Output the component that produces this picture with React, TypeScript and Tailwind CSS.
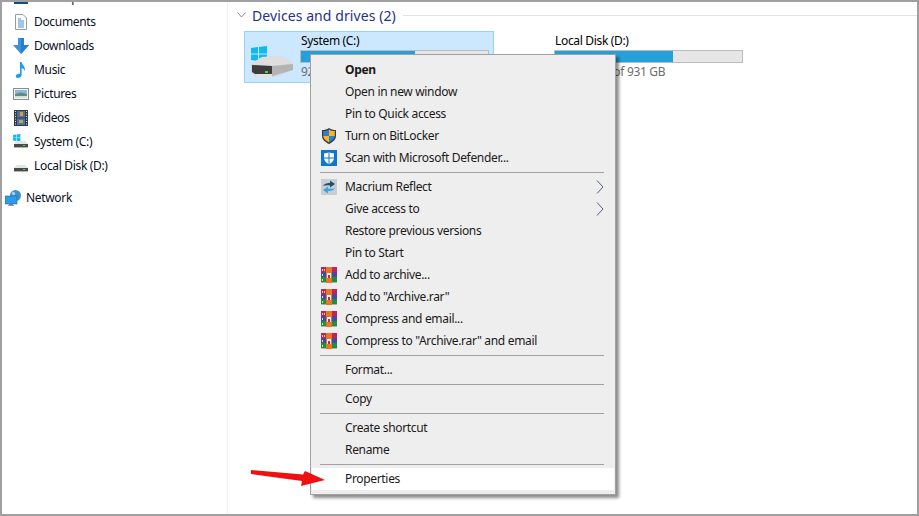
import React from "react";

const DriveBody = ({ x = 0, y = 0 }: { x?: number; y?: number }) => (
  <g transform={`translate(${x} ${y})`}>
    <path d="M0 8 L11 1 L32 0 L42 8 V14 L21 22 H5 L0 16 Z" fill="#d6d6d6" />
    <path d="M0 8 L11 1 L32 0 L42 8 L21 10 Z" fill="#dedede" />
    <path d="M1 9 L21 10 V18 H4 L1 16 Z" fill="#3c3c3c" />
    <path d="M21 10 L42 8 V14 L21 20 Z" fill="#b4b4b4" />
    <path d="M4 18 H21 V22 H6 Z" fill="#e2e2e2" />
    <rect x="14" y="15" width="3" height="2" fill="#3fdc4c" />
  </g>
);

const WinLogo = ({ x, y, s = 1 }: { x: number; y: number; s?: number }) => (
  <g transform={`translate(${x} ${y}) scale(${s})`} fill="#12b8f0">
    <path d="M0 2 L7 1 V7.4 H0 Z" />
    <path d="M8 .9 L16 0 V7.4 H8 Z" />
    <path d="M0 8.4 H7 V15 L0 14 Z" />
    <path d="M8 8.4 H16 V16 L8 15.1 Z" />
  </g>
);

const NavIcon = ({ name }: { name: string }) => {
  const cls = "shrink-0 w-4 h-4";
  switch (name) {
    case "desktop":
      return (
        <svg className={cls} viewBox="0 0 16 16">
          <rect x="1" y="2" width="14" height="10" fill="#1b6fb5" />
          <rect x="1" y="12" width="14" height="2" fill="#0f4c81" />
        </svg>
      );
    case "documents":
      return (
        <svg className={cls} viewBox="0 0 16 16">
          <path d="M2.5 .5 H10 L13.5 4 V15.5 H2.5 Z" fill="#fdfdfd" stroke="#9a9a9a" />
          <path d="M5 5 H8 M5 7 H11 M5 9 H11 M5 11 H11 M5 13 H11" stroke="#3f8fd0" strokeWidth="1" />
        </svg>
      );
    case "downloads":
      return (
        <svg className={cls} viewBox="0 0 16 16">
          <path d="M5 0 H11 V7 H16 L8 16 L0 7 H5 Z" fill="#3a91dc" />
          <path d="M8 0 H11 V7 H16 L8 16 Z" fill="#2a7fcc" />
        </svg>
      );
    case "music":
      return (
        <svg className={cls} viewBox="0 0 16 16">
          <path d="M7 0 H8.6 C9 3 12.5 4 12 9 C11.6 8 10.5 6.5 8.6 6 V13 C8.6 15 6.6 16 5 16 C3.5 16 2.6 15 2.8 14 C3 12.5 5 11.4 7 12 Z" fill="#1f9bef" />
        </svg>
      );
    case "pictures":
      return (
        <svg className={cls} viewBox="0 0 16 16">
          <rect x=".5" y="2.5" width="15" height="11" fill="#f5f5f5" stroke="#8c8c8c" />
          <rect x="2" y="4" width="12" height="4" fill="#8fb8e0" />
          <path d="M2 8 L8 6.5 L14 8 V12 H2 Z" fill="#5f8f7a" />
          <rect x="2" y="10" width="12" height="2" fill="#cfe3d8" />
        </svg>
      );
    case "videos":
      return (
        <svg className={cls} viewBox="0 0 16 16">
          <rect x="1" y="0" width="14" height="16" fill="#3a3a3a" />
          <rect x="4" y="1" width="8" height="6.5" fill="#4d6fb0" />
          <rect x="4" y="8.5" width="8" height="6.5" fill="#3f73c4" />
          <path d="M7 2 H10 V6 H7 Z M6 10 H10 V13 H6 Z" fill="#c9a63a" />
          <path d="M2 1.5 H3 M2 4 H3 M2 6.5 H3 M2 9 H3 M2 11.5 H3 M2 14 H3 M13 1.5 H14 M13 4 H14 M13 6.5 H14 M13 9 H14 M13 11.5 H14 M13 14 H14" stroke="#e0e0e0" strokeWidth="1" />
        </svg>
      );
    case "system":
      return (
        <svg className={cls} viewBox="0 0 16 16">
          <WinLogo x={0} y={0} s={0.46} />
          <path d="M1 10 L4 7 H12 L15 10 Z" fill="#e4e4e4" />
          <rect x="1" y="10" width="14" height="3" fill="#4a4a4a" />
          <rect x="1" y="13" width="14" height="1" fill="#b5b5b5" />
          <rect x="10" y="11" width="2" height="1" fill="#46e04f" />
        </svg>
      );
    case "disk":
      return (
        <svg className={cls} viewBox="0 0 16 16">
          <path d="M1 10 L4 7 H12 L15 10 Z" fill="#e4e4e4" />
          <rect x="1" y="10" width="14" height="3" fill="#4a4a4a" />
          <rect x="1" y="13" width="14" height="1" fill="#b5b5b5" />
          <rect x="10" y="11" width="2" height="1" fill="#46e04f" />
        </svg>
      );
    default:
      return (
        <svg className="shrink-0 w-[17px] h-4" viewBox="0 0 17 16">
          <circle cx="10.5" cy="5.5" r="5.5" fill="#3f8fc9" />
          <path d="M7 2 C9 1 11 3 10 5 C8 6 6 4 7 2 Z" fill="#9fd0ee" />
          <rect x="0" y="6" width="12" height="8" fill="#2f9be8" stroke="#1a6fb5" strokeWidth=".6" />
          <rect x="4" y="14" width="4" height="1" fill="#7a7a7a" />
          <rect x="3" y="15" width="6" height="1" fill="#9a9a9a" />
        </svg>
      );
  }
};

const nav = [
  ["desktop", "Desktop"],
  ["documents", "Documents"],
  ["downloads", "Downloads"],
  ["music", "Music"],
  ["pictures", "Pictures"],
  ["videos", "Videos"],
  ["system", "System (C:)"],
  ["disk", "Local Disk (D:)"],
];

const Shield = () => (
  <svg className="w-4 h-4" viewBox="0 0 16 16">
    <path d="M8 0 C10 1.5 12.5 2 15 2 V8 C15 12 11 14.5 8 16 C5 14.5 1 12 1 8 V2 C3.5 2 6 1.5 8 0 Z" fill="#3a3a4a" />
    <path d="M8 1.5 V8 H2.2 V3 C4 3 6.4 2.6 8 1.5 Z" fill="#2f7fd0" />
    <path d="M8 1.5 C9.6 2.6 12 3 13.8 3 V8 H8 Z" fill="#f6b81a" />
    <path d="M2.2 8 H8 V14.4 C5.4 13 2.4 11 2.2 8 Z" fill="#f6b81a" />
    <path d="M8 8 H13.8 C13.6 11 10.6 13 8 14.4 Z" fill="#2f7fd0" />
  </svg>
);

const Defender = () => (
  <svg className="w-4 h-4" viewBox="0 0 16 16">
    <rect width="16" height="16" fill="#0a78d4" />
    <path d="M8 2 C9.5 3 11.5 3.4 13 3.4 V8 C13 11 10.5 13 8 14.2 C5.5 13 3 11 3 8 V3.4 C4.5 3.4 6.5 3 8 2 Z" fill="#fff" />
    <path d="M7.5 2 H8.5 V14 H7.5 Z M3 7.5 H13 V8.5 H3 Z" fill="#0a78d4" />
  </svg>
);

const Macrium = () => (
  <svg className="w-4 h-4" viewBox="0 0 16 16">
    <rect width="16" height="16" fill="#c9ced2" />
    <path d="M2 7 C4 4 7 4 9 4 V1.5 L14 5 L9 8.5 V6.5 C7 6 4 6 2 7 Z" fill="#1f4f72" />
    <path d="M14 9 C12 12 9 12 7 12 V14.5 L2 11 L7 7.5 V9.5 C9 10 12 10 14 9 Z" fill="#3aa6e0" />
  </svg>
);

const Rar = () => (
  <svg className="w-4 h-4" viewBox="0 0 16 16" shapeRendering="crispEdges">
    <rect x="0" y="0" width="16" height="5" fill="#c2225c" />
    <rect x="0" y="5" width="16" height="5" fill="#4a46a8" />
    <rect x="0" y="10" width="16" height="5" fill="#1f8f3c" />
    <rect x="0" y="15" width="16" height="1" fill="#b0b0b0" />
    <rect x="5" y="0" width="6" height="16" fill="#e8762a" />
    <rect x="6" y="6" width="4" height="5" fill="#fff" />
    <rect x="7" y="8" width="2" height="3" fill="#c2225c" />
    <rect x="1" y="2" width="1" height="2" fill="#f2e04a" />
    <rect x="3" y="2" width="1" height="2" fill="#f2e04a" />
    <rect x="1" y="7" width="1" height="2" fill="#f2e04a" />
    <rect x="1" y="12" width="1" height="2" fill="#f2e04a" />
  </svg>
);

const Chevron = () => (
  <svg className="w-2 h-[14px]" viewBox="0 0 8 14">
    <path d="M1 .5 L7 7 L1 13.5" fill="none" stroke="#4f5f85" strokeWidth="1" />
  </svg>
);

const Item = ({
  label,
  icon,
  arrow,
  bold,
  active,
}: {
  label: string;
  icon?: React.ReactNode;
  arrow?: boolean;
  bold?: boolean;
  active?: boolean;
}) => (
  <div className={`flex items-center h-[22px] mx-px ${active ? "bg-white" : ""}`}>
    <div className="w-[33px] flex justify-end shrink-0">
      <div className="w-4 h-4 mr-[8px]">{icon}</div>
    </div>
    <span className={`grow ${bold ? "font-bold" : ""}`}>{label}</span>
    {arrow && (
      <span className="mr-[10px] flex">
        <Chevron />
      </span>
    )}
  </div>
);

const Sep = () => <div className="h-px bg-[#a0a0a0] ml-[9px] mr-[11px] my-[3px]" />;

const Tile = ({
  name,
  free,
  fill,
  selected,
  win,
}: {
  name: string;
  free: string;
  fill: string;
  selected?: boolean;
  win?: boolean;
}) => (
  <div
    className={`flex w-[250px] h-[52px] border ${
      selected ? "bg-[#cce8ff] border-[#99d1ff]" : "border-transparent"
    }`}
  >
    <svg className="w-[55px] h-[50px] shrink-0" viewBox="0 0 55 50">
      {win && <WinLogo x={6} y={14} />}
      <DriveBody x={6} y={24} />
    </svg>
    <div className="flex flex-col">
      <div className="h-[18px] pl-px leading-[18px] text-black">{name}</div>
      <div className="w-[189px] h-[13px] border border-[#bcbcbc] bg-[#e6e6e6]">
        <div className={`h-full bg-[#26a0da] ${fill}`} />
      </div>
      <div className="h-[18px] pl-px leading-[18px] text-[#6d6d6d] whitespace-nowrap">{free}</div>
    </div>
  </div>
);

export default function App() {
  return (
    <div
      className="relative w-[919px] h-[516px] overflow-hidden bg-white border-t-2 border-x-2 border-b-2 border-[#a0a0a0] text-[12px] tracking-[-0.33px] text-[#1a1a1a] flex"
      style={{ fontFamily: '"Noto Sans", "Open Sans", sans-serif' }}
    >
      <aside className="w-[226px] shrink-0 border-r border-[#f0f0f0] -mt-[16px]">
        {nav.map(([k, l]) => (
          <div key={k} className="flex items-center h-6 pl-[11px] gap-[5px] text-[#0a0f1f]">
            <NavIcon name={k} />
            <span>{l}</span>
          </div>
        ))}
        <div className="flex items-center h-6 pl-[3px] gap-[4px] mt-2 text-[#0a0f1f]">
          <NavIcon name="network" />
          <span>Network</span>
        </div>
      </aside>

      <main className="grow pt-[2px]">
        <div className="flex items-center h-[22px] pl-[9px]">
          <svg className="w-[9px] h-[6px]" viewBox="0 0 9 6">
            <path d="M.5 .5 L4.5 5 L8.5 .5" fill="none" stroke="#8a8a8a" />
          </svg>
          <span className="ml-[6px] text-[14px] tracking-[0.08px] text-[#1e3287] whitespace-nowrap">Devices and drives (2)</span>
          <div className="ml-[7px] grow h-px bg-[#e2e2e2]" />
        </div>
        <div className="flex ml-[16px] mt-[5px] gap-[4px]">
          <Tile name="System (C:)" free="92.9 GB free of 237 GB" fill="w-[61%]" selected win />
          <Tile name="Local Disk (D:)" free="34 GB free of 931 GB" fill="w-[63%]" />
        </div>
      </main>

      {/* context menu */}
      <div className="absolute left-[308px] top-[52px] w-[306px] h-[441px] bg-[#eeeeee] border border-[#a0a0a0] pt-[4px] text-[#1a1a1a] shadow-[3px_3px_3px_rgba(0,0,0,0.45)]">
        <Item label="Open" bold />
        <Item label="Open in new window" />
        <Item label="Pin to Quick access" />
        <Item label="Turn on BitLocker" icon={<Shield />} />
        <Item label="Scan with Microsoft Defender..." icon={<Defender />} />
        <Sep />
        <Item label="Macrium Reflect" icon={<Macrium />} arrow />
        <Item label="Give access to" arrow />
        <Item label="Restore previous versions" />
        <Item label="Pin to Start" />
        <Item label="Add to archive..." icon={<Rar />} />
        <Item label={'Add to "Archive.rar"'} icon={<Rar />} />
        <Item label="Compress and email..." icon={<Rar />} />
        <Item label={'Compress to "Archive.rar" and email'} icon={<Rar />} />
        <Sep />
        <Item label="Format..." />
        <Sep />
        <Item label="Copy" />
        <Sep />
        <Item label="Create shortcut" />
        <Item label="Rename" />
        <Sep />
        <Item label="Properties" active />
      </div>

      {/* annotation arrow */}
      <svg className="absolute left-[249px] top-[466px] w-[76px] h-[20px]" viewBox="0 0 76 20">
        <path d="M0 2 L52 6.5 L54 3 L74 12 L50 18 L51 13 L0 6 Z" fill="#ee1111" />
      </svg>
    </div>
  );
}
